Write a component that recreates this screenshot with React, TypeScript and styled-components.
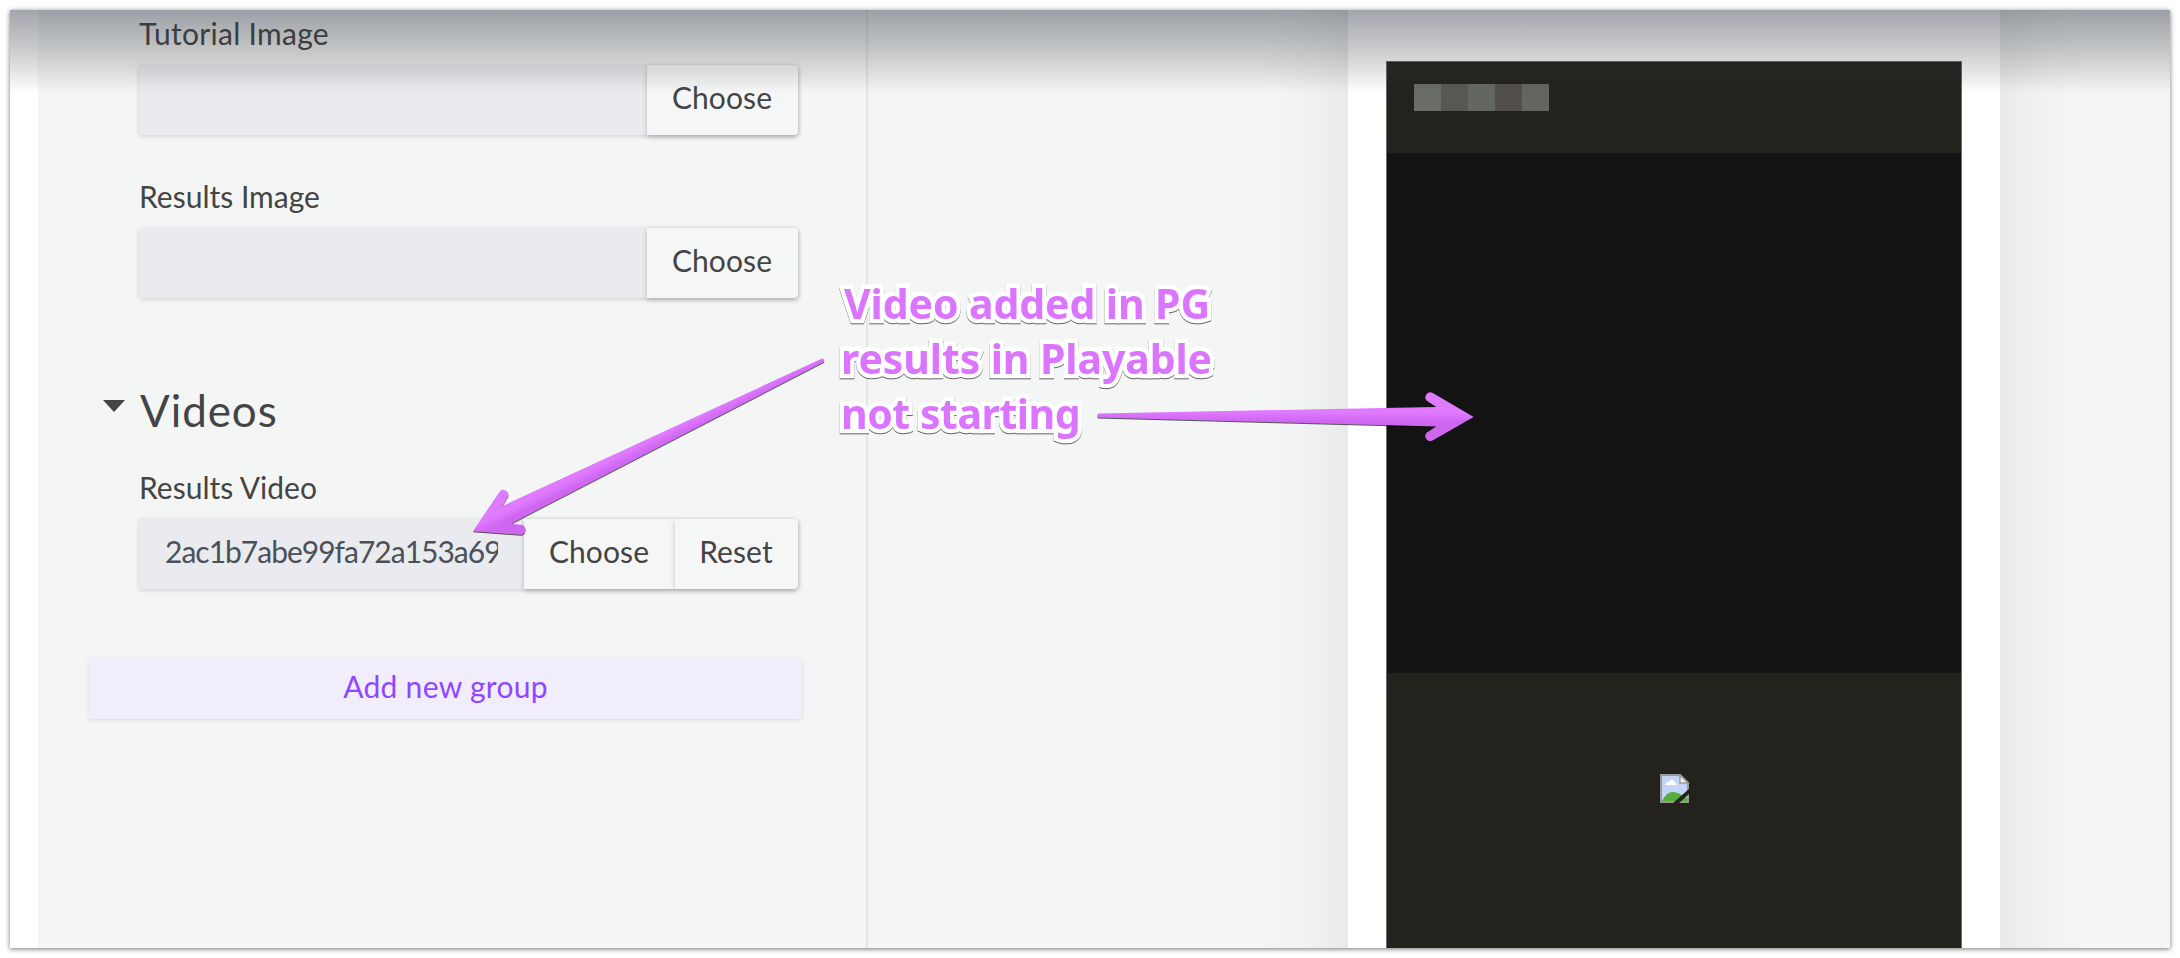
import React from "react";
import styled, { createGlobalStyle } from "styled-components";

const GlobalStyle = createGlobalStyle`
  * { box-sizing: border-box; }
  body { margin: 0; background: #fff; font-family: Lato, "Liberation Sans", sans-serif; color: #444; }
`;

const Page = styled.div`
  width: 2180px;
  height: 958px;
  padding: 10px;
  overflow: hidden;
  position: relative;
`;

const Frame = styled.main`
  display: flex;
  height: 938px;
  background: #f4f6f6;
  overflow: hidden;
  position: relative;
  box-shadow: 0 1px 5px rgba(0, 0, 0, 0.55);
`;

const TopShade = styled.div`
  position: absolute;
  inset: 0 0 auto 0;
  height: 83px;
  background: linear-gradient(rgba(40, 48, 62, 0.43), rgba(45, 47, 52, 0.26) 45%, rgba(50, 50, 55, 0.14) 72%, rgba(50, 50, 60, 0));
`;

const Gutter = styled.div`
  flex: 0 0 28px;
  background: #fff;
`;

const Form = styled.section`
  flex: 0 0 830px;
  padding: 8px 0 0 51px;
  border-right: 2px solid #e4e6e6;
`;

const Fields = styled.div`
  width: 659px;
  margin-left: 50px;
`;

const Field = styled.div<{ $gap: number }>`
  height: 117px;
  margin-bottom: ${(p) => p.$gap}px;
`;

const Label = styled.label<{ $spacing: number }>`
  display: block;
  height: 47px;
  line-height: 30px;
  font-size: 30px;
  letter-spacing: ${(p) => p.$spacing}px;
  white-space: nowrap;
`;

const Control = styled.div`
  display: flex;
  height: 70px;
  border-radius: 4px;
  background: #eaebef;
  box-shadow: 0 1px 5px rgba(0, 0, 0, 0.16);
`;

const Value = styled.div`
  flex: 1;
  min-width: 0;
  margin: 0 26px 0 26px;
  overflow: hidden;
  white-space: nowrap;
  font-size: 30px;
  line-height: 65px;
  letter-spacing: -1px;
  color: #4a5159;
`;

const Button = styled.button<{ $width: number }>`
  width: ${(p) => p.$width}px;
  height: 70px;
  padding: 0 1px 6px 0;
  border: 0;
  background: #f5f7f7;
  color: #444;
  font: 30px Lato, "Liberation Sans", sans-serif;
  letter-spacing: 0.1px;
  box-shadow: 0 2px 5px rgba(0, 0, 0, 0.23);
  &:last-child { border-radius: 0 4px 4px 0; }
`;

const GroupHeading = styled.h2`
  display: flex;
  align-items: center;
  gap: 15px;
  height: 56px;
  margin: 0 0 34px 14px;
  font-size: 44px;
  line-height: 56px;
  font-weight: 400;
  letter-spacing: 0.9px;
  svg { margin-top: -9px; }
`;

const AddGroup = styled.button`
  display: block;
  width: 713px;
  height: 61px;
  padding: 0 0 6px;
  border: 0;
  border-radius: 3px;
  background: #f2edfc;
  color: #8f47ff;
  font: 30px Lato, "Liberation Sans", sans-serif;
  letter-spacing: 0.3px;
  box-shadow: 0 1px 4px rgba(0, 0, 0, 0.12);
`;

const Preview = styled.section`
  flex: 1;
  display: flex;
  padding-left: 480px;
  overflow: hidden;
`;

const Device = styled.div`
  width: 652px;
  margin: -100px 0;
  padding: 151px 38px 0;
  background: #fff;
  box-shadow: 0 0 90px rgba(0, 0, 0, 0.09);
`;

const Screen = styled.div`
  height: 900px;
  border: 1px solid #666c68;
  border-bottom: 0;
  background: #23221d;
`;

const ScreenHeader = styled.div`
  display: flex;
  height: 91px;
  padding: 22px 0 0 27px;
`;

const Block = styled.span<{ $color: string }>`
  width: 27px;
  height: 27px;
  background: ${(p) => p.$color};
`;

const VideoArea = styled.div`
  height: 520px;
  background: #131313;
`;

const ScreenFooter = styled.div`
  display: flex;
  justify-content: center;
  padding: 101px 0 0 1px;
`;

const Overlay = styled.svg`
  position: absolute;
  inset: 0;
  filter: drop-shadow(0 1px 0.4px rgba(0, 0, 0, 0.65));
`;

const Note = styled.p`
  position: absolute;
  left: 841px;
  top: 276px;
  margin: 0;
  font: 700 41px/55px "Noto Sans", sans-serif;
  color: #db75ff;
  -webkit-text-stroke: 8.5px #fff;
  paint-order: stroke fill;
  stroke-linejoin: round;
  filter: drop-shadow(0 1px 0.4px rgba(0, 0, 0, 0.6));
`;

const NoteLine = styled.span<{ $spacing: number; $indent?: number }>`
  display: block;
  padding-left: ${(p) => p.$indent ?? 0}px;
  letter-spacing: ${(p) => p.$spacing}px;
  white-space: nowrap;
`;

type ArrowProps = { tail: [number, number]; tip: [number, number]; flip?: boolean };

function Arrow({ tail, tip, flip }: ArrowProps) {
  const dx = tip[0] - tail[0];
  const dy = tip[1] - tail[1];
  const length = Math.hypot(dx, dy);
  const angle = (Math.atan2(dy, dx) * 180) / Math.PI;
  return (
    <g transform={`translate(${tip[0]} ${tip[1]}) rotate(${angle}) scale(1 ${flip ? -1 : 1})`}>
      <path
        fill="url(#arrowFill)"
        d={`M0 0 L-41 -23.8 A5 5 0 0 0 -47 -16 L-37.5 -9.8 L${-length} -2 Q${-length - 1} 0 ${-length} 2 L-37.5 9.8 L-47 16 A5 5 0 0 0 -41 23.8 Z`}
      />
    </g>
  );
}

function BrokenImage() {
  return (
    <svg width="30" height="30" viewBox="0 0 30 30">
      <path d="M1 1h19l8 8v19H1z" fill="#c3d5f7" stroke="#999" strokeWidth="2" />
      <path d="M5 11q0-3 4-3 1-3 4-2 2 1 2 3 2 0 2 2z" fill="#fff" />
      <path d="M2 27q5-10 12-9 5 1 8 3l5 3v3z" fill="#58ae3b" />
      <path d="M20 1v8h8z" fill="#f4f4f4" stroke="#999" strokeWidth="1.5" />
      <path d="M12 30 30 14v5L18 30z" fill="#23221d" />
    </svg>
  );
}

const blocks = ["#6a6c66", "#565851", "#646660", "#524f4a", "#666460"];

export default function App() {
  return (
    <Page>
      <GlobalStyle />
      <Frame>
        <Gutter />
        <Form>
          <Fields>
            <Field $gap={46}>
              <Label $spacing={0.3}>Tutorial Image</Label>
              <Control>
                <Value />
                <Button $width={151}>Choose</Button>
              </Control>
            </Field>
            <Field $gap={84}>
              <Label $spacing={0}>Results Image</Label>
              <Control>
                <Value />
                <Button $width={151}>Choose</Button>
              </Control>
            </Field>
          </Fields>
          <GroupHeading>
            <svg width="22" height="12" viewBox="0 0 22 12"><path d="M0 0h22L11 12z" fill="#444" /></svg>
            Videos
          </GroupHeading>
          <Fields>
            <Field $gap={69}>
              <Label $spacing={0}>Results Video</Label>
              <Control>
                <Value>2ac1b7abe99fa72a153a69</Value>
                <Button $width={151}>Choose</Button>
                <Button $width={123}>Reset</Button>
              </Control>
            </Field>
          </Fields>
          <AddGroup>Add new group</AddGroup>
        </Form>
        <Preview>
          <Device>
            <Screen>
              <ScreenHeader>
                {blocks.map((color) => <Block key={color} $color={color} />)}
              </ScreenHeader>
              <VideoArea />
              <ScreenFooter><BrokenImage /></ScreenFooter>
            </Screen>
          </Device>
        </Preview>
        <TopShade />
      </Frame>
      <Overlay width="2180" height="958" viewBox="0 0 2180 958">
        <defs>
          <linearGradient id="arrowFill" gradientUnits="userSpaceOnUse" x1="0" y1="-10" x2="0" y2="10">
            <stop offset="0.3" stopColor="#e07aff" />
            <stop offset="0.75" stopColor="#ce66f0" />
          </linearGradient>
        </defs>
        <Arrow tail={[823.5, 360]} tip={[473, 531.3]} flip />
        <Arrow tail={[1098, 415.5]} tip={[1473.7, 416.9]} />
      </Overlay>
      <Note>
        <NoteLine $spacing={-0.1} $indent={3}>Video added in PG</NoteLine>
        <NoteLine $spacing={-0.1}>results in Playable</NoteLine>
        <NoteLine $spacing={-0.45}>not starting</NoteLine>
      </Note>
    </Page>
  );
}
